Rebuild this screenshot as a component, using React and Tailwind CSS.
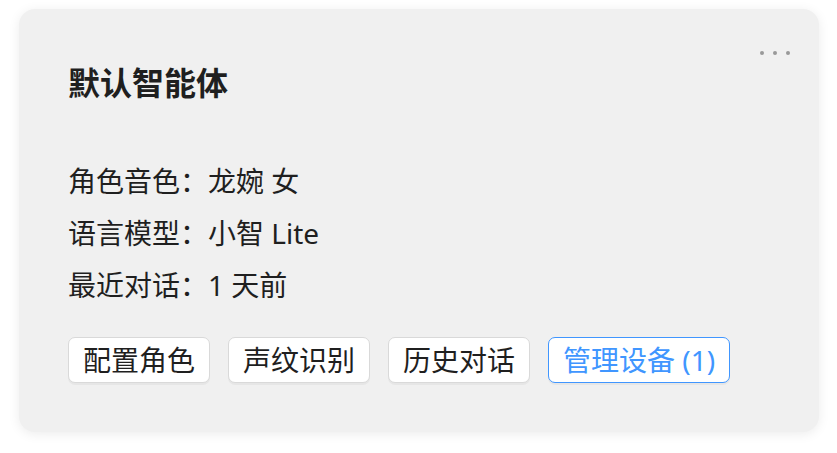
import React from "react";

const font = { fontFamily: '"Noto Sans", "Noto Sans CJK SC", sans-serif' };

function Btn({ children, primary }) {
  return (
    <button
      className={
        primary
          ? "h-[46px] px-[14px] rounded-[7px] border-[1.5px] border-[#4096ff] bg-white text-[#4096ff] text-[28px] leading-none shadow-[0_2px_0_rgba(0,0,0,0.04)]"
          : "h-[46px] px-[14px] rounded-[7px] border-[1.5px] border-[#d9d9d9] bg-white text-[#1f1f1f] text-[28px] leading-none shadow-[0_2px_0_rgba(0,0,0,0.04)]"
      }
    >
      {children}
    </button>
  );
}

export default function App() {
  return (
    <div className="w-[837px] h-[453px] bg-white pt-[9px] pl-[19px]" style={font}>
      <div className="relative w-[800px] h-[423px] rounded-[16px] bg-[#f0f0f0] shadow-[0_2px_12px_rgba(0,0,0,0.08)] pt-[50px] pl-[49px]">
        <div className="absolute top-[42px] right-[29px] flex gap-[9px]">
          <span className="w-[4px] h-[4px] rounded-full bg-[#999]" />
          <span className="w-[4px] h-[4px] rounded-full bg-[#999]" />
          <span className="w-[4px] h-[4px] rounded-full bg-[#999]" />
        </div>
        <div className="text-[32px] leading-[48px] font-semibold text-[#1f1f1f]">默认智能体</div>
        <div className="mt-[48px] text-[28px] leading-[52px] text-[#1f1f1f]">
          <div>角色音色：龙婉 女</div>
          <div>语言模型：小智 Lite</div>
          <div>最近对话：1 天前</div>
        </div>
        <div className="mt-[26px] flex gap-[18px]">
          <Btn>配置角色</Btn>
          <Btn>声纹识别</Btn>
          <Btn>历史对话</Btn>
          <Btn primary>管理设备 (1)</Btn>
        </div>
      </div>
    </div>
  );
}
